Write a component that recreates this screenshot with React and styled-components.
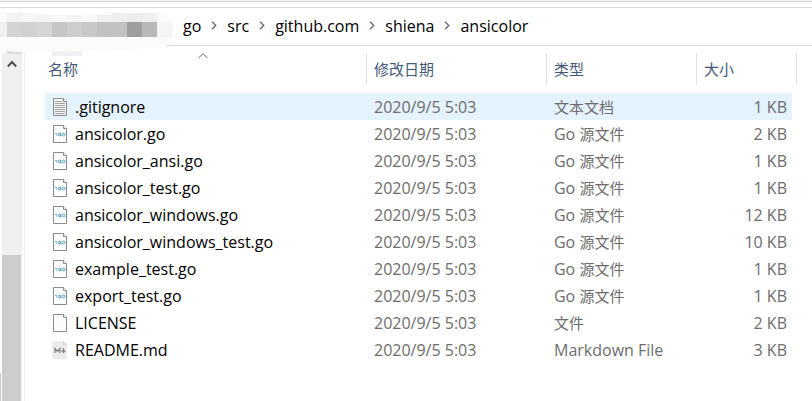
import { styled, createGlobalStyle } from "styled-components";

const GlobalStyle = createGlobalStyle`
* {
box-sizing: border-box;
}
body {
margin: 0;
background-color: #ffffff;
color: #000000;
font-family: "Open Sans", "Noto Sans CJK SC", sans-serif;
font-size: 16px;
overflow: hidden;
}
`;

const StyledWindow = styled.div`
display: flex;
flex-direction: column;
min-height: 100vh;
`;

const StyledRibbon = styled.div`
height: 8px;
border-top: 1px solid #f5f5f5;
border-bottom: 1px solid #d9d9d9;
box-shadow: inset 0 1px #d9d9d9;
`;

const StyledAddress = styled.nav`
position: relative;
display: flex;
align-items: center;
height: 38px;
padding: 0 0 2px 183px;
border-bottom: 1px solid #d9d9d9;
`;

const StyledMosaic = styled.svg`
position: absolute;
top: 0;
left: 0;
z-index: 1;
`;

const StyledPath = styled.ol`
display: flex;
align-items: center;
gap: 10px;
margin: 0;
padding: 0;
list-style: none;
`;

const StyledCrumb = styled.li`
display: flex;
align-items: center;
gap: 10px;
`;

const StyledLink = styled.a`
color: #000000;
line-height: 20px;
text-decoration: none;
`;

const StyledIconButton = styled.button`
display: flex;
justify-content: center;
width: ${(props) => props.$width};
padding: 0;
border: none;
background: none;
`;

const StyledMain = styled.div`
display: flex;
flex-grow: 1;
`;

const StyledTreeEdge = styled.div`
display: flex;
align-items: flex-end;
flex-shrink: 0;
width: 2px;
`;

const StyledTreeLine = styled.div`
width: 1px;
height: 28px;
background-color: #cdcdcd;
`;

const StyledScrollbar = styled.div`
display: flex;
flex-direction: column;
flex-shrink: 0;
width: 20px;
margin-top: 7px;
padding-top: 7px;
background-color: #f0f0f0;
`;

const StyledTrack = styled.div`
flex-grow: 9;
`;

const StyledThumb = styled.div`
flex-grow: 7;
width: 19px;
background-color: #cdcdcd;
`;

const StyledPane = styled.main`
flex-grow: 1;
margin-left: 2px;
padding: 7px 15px 0 20px;
border-left: 1px solid #f0f0f0;
`;

const StyledTable = styled.table`
width: 100%;
table-layout: fixed;
border-spacing: 0;
`;

const StyledCol = styled.col`
width: ${(props) => props.$width};
`;

const StyledTh = styled.th`
padding: 0 0 8px;
color: #44597a;
font-size: 15px;
font-weight: normal;
text-align: left;
`;

const StyledHeading = styled.div`
position: relative;
height: 32px;
padding-left: ${(props) => props.$indent};
border-right: 1px solid #e2e2e2;
line-height: 32px;
`;

const StyledSort = styled.svg`
position: absolute;
top: 0;
left: 153px;
`;

const StyledRow = styled.tr`
background-color: ${(props) => (props.$selected ? "#e5f3ff" : "transparent")};
`;

const StyledTd = styled.td`
height: 27px;
padding: 0 0 0 7px;
color: #6d6d6d;
line-height: 26px;
white-space: nowrap;
`;

const StyledSize = styled(StyledTd)`
padding: 0 5px 0 0;
text-align: right;
`;

const StyledName = styled.div`
display: flex;
align-items: center;
gap: 7px;
color: #000000;
`;

const StyledHan = styled.span`
font-size: 15px;
`;

const Chevron = () => (
    <svg width="6" height="9" viewBox="0 0 6 9" fill="none" stroke="#777777" strokeWidth="1.6">
        <path d="M1 0.8 L4.7 4.5 L1 8.2" />
    </svg>
);

const FileIcon = ({ kind }) => {
    if (kind === "md") {
        return (
            <svg width="16" height="20" viewBox="0 0 16 20">
                <path d="M2 1 H11 L15 5 V17 Q15 19 13 19 H2 Q0 19 0 17 V3 Q0 1 2 1 Z" fill="#ececec" />
                <path d="M11 1 V5 H15 Z" fill="#d2d2d2" />
                <path d="M3 13 V8.5 L5.5 11.5 L8 8.5 V13" fill="none" stroke="#858585" strokeWidth="1.3" />
                <path d="M11.5 8 V12 M9.8 10.5 L11.5 12.5 L13.2 10.5" fill="none" stroke="#858585" strokeWidth="1.2" />
            </svg>
        );
    }
    return (
        <svg width="16" height="20" viewBox="0 0 16 20">
            <path d="M1.5 1.5 H11.5 L14.5 4.5 V18.5 H1.5 Z" fill={kind === "text" ? "#f5f5f5" : "#fbfcfd"} stroke="#8b8b8b" />
            <path d="M11.5 1.5 V4.5 H14.5" fill="#ffffff" stroke="#8b8b8b" />
            {kind === "text" && (
                <path d="M3 4.5 H10 M3 6.5 H13 M3 8.5 H13 M3 10.5 H13 M3 12.5 H13 M3 14.5 H13 M3 16.5 H13" stroke="#a3a3a3" />
            )}
            {kind === "go" && (
                <g fill="none" stroke="#4fa3c2">
                    <path d="M3 9.5 H5 M4 11 H5.5" strokeWidth="0.8" />
                    <path d="M9 9.4 Q6.4 8.4 6.2 10.5 Q6.4 12.6 9 11.6 V10.6 H7.8" strokeWidth="1" />
                    <ellipse cx="11.5" cy="10.5" rx="1.5" ry="1.4" strokeWidth="1" />
                </g>
            )}
        </svg>
    );
};

const blocks = ["#d4d4d4", "#d1d1d1", "#d6d6d6", "#c6c6c6", "#cdcdcd", "#c8c8c8", "#c1c1c1", "#c2c2c2", "#9e9e9e", "#b8b8b8"];
const upper = ["#f2f2f2", "#f7f7f7", "#f5f5f5", "#f8f8f8", "#f4f4f4", "#f7f7f7", "#f0f0f0", "#eeeeee", "#ededed", "#f0f0f0"];

const Mosaic = () => (
    <StyledMosaic width="176" height="50" viewBox="0 0 176 50" aria-hidden="true">
        <path d="M7 42 H22 V46 H7 Z" fill="#dddddd" />
        <path d="M52 42 H82 V48 H52 Z" fill="#f0f0f4" />
        <path d="M0 4 Q24 2 50 7 Q80 8 108 4 Q135 1 156 3 Q174 7 174 23 Q174 38 158 40 Q90 44 15 44 L0 41 Z" fill="#fbfbfb" />
        <path d="M0 14 H7 V29 H0 Z" fill="#f0f0f0" />
        {blocks.map((color, i) => (
            <g key={i}>
                <rect x={7 + i * 15} y={i < 2 || i > 6 ? 5 : 7} width="15" height={i < 2 || i > 6 ? 9 : 7} fill={upper[i]} />
                <rect x={7 + i * 15} y="14" width="15" height="15" fill={color} />
            </g>
        ))}
        <path d="M157 14 H172 V29 H157 Z" fill="#f5f5f5" />
    </StyledMosaic>
);

const folders = ["go", "src", "github.com", "shiena", "ansicolor"];

const files = [
    { name: ".gitignore", kind: "text", type: <StyledHan>文本文档</StyledHan>, size: "1 KB" },
    { name: "ansicolor.go", kind: "go", type: <>Go <StyledHan>源文件</StyledHan></>, size: "2 KB" },
    { name: "ansicolor_ansi.go", kind: "go", type: <>Go <StyledHan>源文件</StyledHan></>, size: "1 KB" },
    { name: "ansicolor_test.go", kind: "go", type: <>Go <StyledHan>源文件</StyledHan></>, size: "1 KB" },
    { name: "ansicolor_windows.go", kind: "go", type: <>Go <StyledHan>源文件</StyledHan></>, size: "12 KB" },
    { name: "ansicolor_windows_test.go", kind: "go", type: <>Go <StyledHan>源文件</StyledHan></>, size: "10 KB" },
    { name: "example_test.go", kind: "go", type: <>Go <StyledHan>源文件</StyledHan></>, size: "1 KB" },
    { name: "export_test.go", kind: "go", type: <>Go <StyledHan>源文件</StyledHan></>, size: "1 KB" },
    { name: "LICENSE", kind: "blank", type: <StyledHan>文件</StyledHan>, size: "2 KB" },
    { name: "README.md", kind: "md", type: "Markdown File", size: "3 KB" },
];

const App = () => {
    return (
        <StyledWindow>
            <GlobalStyle />
            <StyledRibbon />
            <StyledAddress>
                <Mosaic />
                <StyledPath>
                    {folders.map((folder, i) => (
                        <StyledCrumb key={folder}>
                            <StyledLink href="#">{folder}</StyledLink>
                            {i < folders.length - 1 && (
                                <StyledIconButton $width="6px" aria-label={folder}><Chevron /></StyledIconButton>
                            )}
                        </StyledCrumb>
                    ))}
                </StyledPath>
            </StyledAddress>
            <StyledMain>
                <StyledTreeEdge><StyledTreeLine /></StyledTreeEdge>
                <StyledScrollbar>
                    <StyledIconButton $width="19px">
                        <svg width="10" height="8" viewBox="0 0 10 8" fill="none" stroke="#505050" strokeWidth="2">
                            <path d="M0.8 6.5 L5 2 L9.2 6.5" />
                        </svg>
                    </StyledIconButton>
                    <StyledTrack />
                    <StyledThumb />
                </StyledScrollbar>
                <StyledPane>
                    <StyledTable>
                        <colgroup>
                            <col />
                            <StyledCol $width="180px" />
                            <StyledCol $width="150px" />
                            <StyledCol $width="95px" />
                            <StyledCol $width="5px" />
                        </colgroup>
                        <thead>
                            <tr>
                                <StyledTh>
                                    <StyledHeading $indent="3px">
                                        名称
                                        <StyledSort width="10" height="6" viewBox="0 0 10 6" fill="none" stroke="#666666">
                                            <path d="M0.5 5 L5 0.8 L9.5 5" />
                                        </StyledSort>
                                    </StyledHeading>
                                </StyledTh>
                                <StyledTh><StyledHeading $indent="7px">修改日期</StyledHeading></StyledTh>
                                <StyledTh><StyledHeading $indent="7px">类型</StyledHeading></StyledTh>
                                <StyledTh colSpan={2}><StyledHeading $indent="7px">大小</StyledHeading></StyledTh>
                            </tr>
                        </thead>
                        <tbody>
                            {files.map((file) => (
                                <StyledRow key={file.name} $selected={file.name === ".gitignore"}>
                                    <StyledTd>
                                        <StyledName><FileIcon kind={file.kind} />{file.name}</StyledName>
                                    </StyledTd>
                                    <StyledTd>2020/9/5 5:03</StyledTd>
                                    <StyledTd>{file.type}</StyledTd>
                                    <StyledSize>{file.size}</StyledSize>
                                </StyledRow>
                            ))}
                        </tbody>
                    </StyledTable>
                </StyledPane>
            </StyledMain>
        </StyledWindow>
    );
};

export default App;
